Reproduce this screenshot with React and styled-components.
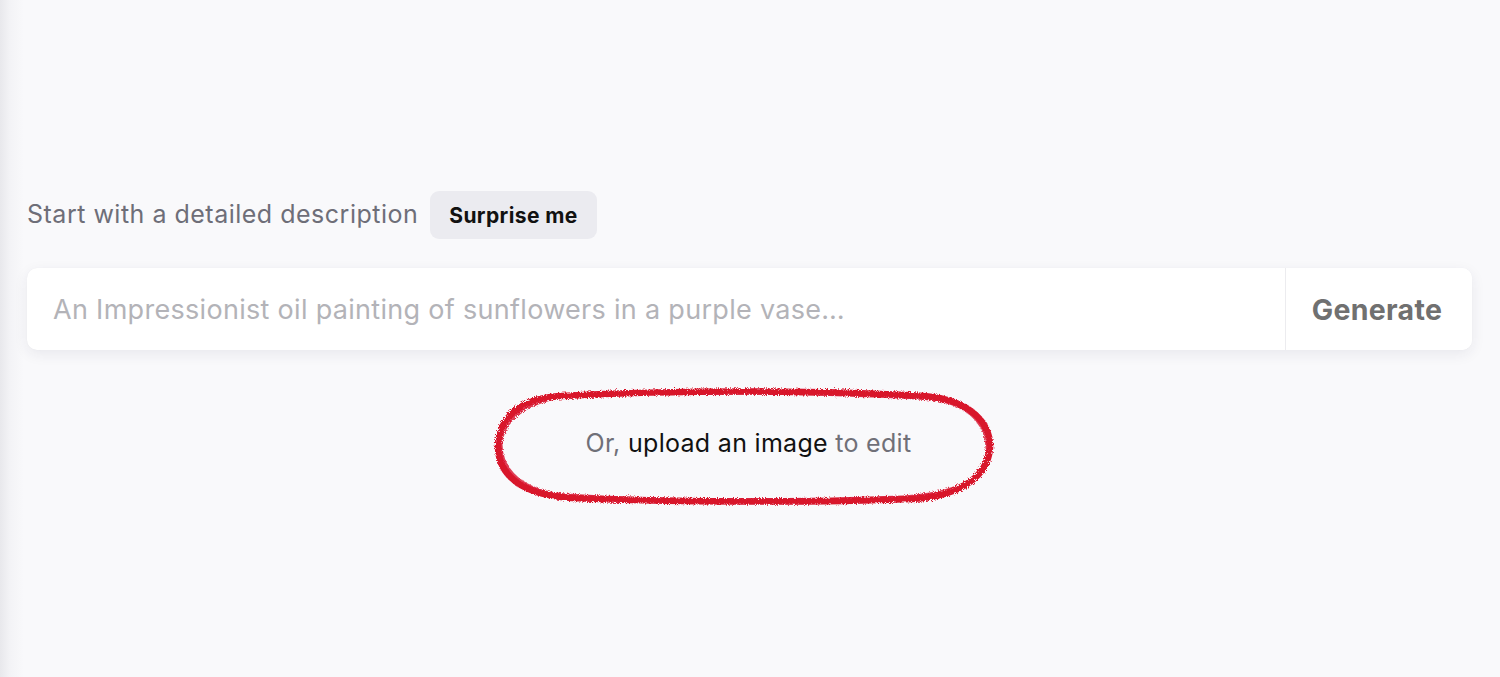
import React from 'react';
import styled, { createGlobalStyle } from 'styled-components';

const GlobalStyle = createGlobalStyle`
  html, body {
    margin: 0;
    padding: 0;
    height: 100%;
  }
  body {
    font-family: Inter, "Noto Sans", sans-serif;
    background: linear-gradient(to right, #e8e8ec 0px, #f3f3f6 10px, #f9f9fb 24px, #f9f9fb 100%);
  }
`;

const Page = styled.div`
  width: 1500px;
  height: 677px;
  box-sizing: border-box;
  padding: 191px 28px 0 27px;
  display: flex;
  flex-direction: column;
`;

const PromptHeader = styled.div`
  display: flex;
  align-items: center;
  gap: 12px;
  height: 48px;
`;

const Label = styled.span`
  font-size: 25px;
  letter-spacing: 0.5px;
  color: #6e6e78;
  margin-top: -3px;
`;

const SurpriseButton = styled.button`
  height: 48px;
  padding: 0 19px;
  border: none;
  border-radius: 9px;
  background: #ebebf0;
  color: #111;
  font-family: Inter, sans-serif;
  font-size: 21px;
  letter-spacing: 0.4px;
  font-weight: 700;
  cursor: pointer;
`;

const InputBar = styled.div`
  margin-top: 29px;
  height: 82px;
  display: flex;
  background: #fff;
  border-radius: 10px;
  box-shadow: 0 4px 14px rgba(40, 40, 80, 0.08), 0 0 1px rgba(0, 0, 0, 0.06);
  overflow: hidden;
`;

const PromptInput = styled.input`
  flex: 1;
  border: none;
  outline: none;
  background: transparent;
  padding: 0 26px;
  font-family: Inter, sans-serif;
  font-size: 27px;
  letter-spacing: 0.3px;
  color: #333;

  &::placeholder {
    color: #b3b3b8;
  }
`;

const GenerateButton = styled.button`
  width: 187px;
  border: none;
  border-left: 1px solid #ececef;
  background: #fff;
  color: #707070;
  font-family: Inter, sans-serif;
  font-size: 28.5px;
  letter-spacing: 0.3px;
  font-weight: 700;
  cursor: pointer;
  padding: 0 4px 0 0;
`;

const UploadRow = styled.div`
  margin-top: 36px;
  display: flex;
  justify-content: center;
`;

const UploadWrap = styled.div`
  position: relative;
  width: 500px;
  height: 116px;
  display: flex;
  align-items: center;
  justify-content: center;
`;

const UploadText = styled.span`
  font-size: 25px;
  letter-spacing: 0.3px;
  color: #707078;
  margin-left: -2px;
  margin-top: -2px;
`;

const UploadLink = styled.span`
  color: #111;
`;

const Scribble = styled.svg`
  position: absolute;
  left: -8px;
  top: 0;
  pointer-events: none;
`;

export default function App() {
  return (
    <>
      <GlobalStyle />
      <Page>
        <PromptHeader>
          <Label>Start with a detailed description</Label>
          <SurpriseButton>Surprise me</SurpriseButton>
        </PromptHeader>
        <InputBar>
          <PromptInput placeholder="An Impressionist oil painting of sunflowers in a purple vase…" />
          <GenerateButton>Generate</GenerateButton>
        </InputBar>
        <UploadRow>
          <UploadWrap>
            <UploadText>
              Or, <UploadLink>upload an image</UploadLink> to edit
            </UploadText>
            <Scribble width="506" height="120" viewBox="0 0 506 120">
              <defs>
                <filter id="rough" x="-5%" y="-10%" width="110%" height="120%">
                  <feTurbulence type="fractalNoise" baseFrequency="1.1" numOctaves="2" seed="3" result="n" />
                  <feDisplacementMap in="SourceGraphic" in2="n" scale="5" />
                </filter>
              </defs>
              <g filter="url(#rough)" fill="none" stroke="#d8132c" strokeLinecap="round">
                <path
                  d="M70 10 C180 4 330 4 432 10 C482 14 499 40 498 62 C496 88 472 110 420 113 C320 117 180 116 80 112 C28 109 6 88 6 60 C7 30 30 12 70 10 Z"
                  strokeWidth="6.5"
                />
                <path
                  d="M92 8 C200 5 340 7 438 13 C485 18 496 46 495 66 C491 94 464 108 410 111 C300 115 170 115 75 109 C30 106 9 84 9 58 C11 31 38 12 92 8"
                  strokeWidth="3"
                  opacity="0.8"
                />
              </g>
            </Scribble>
          </UploadWrap>
        </UploadRow>
      </Page>
    </>
  );
}
